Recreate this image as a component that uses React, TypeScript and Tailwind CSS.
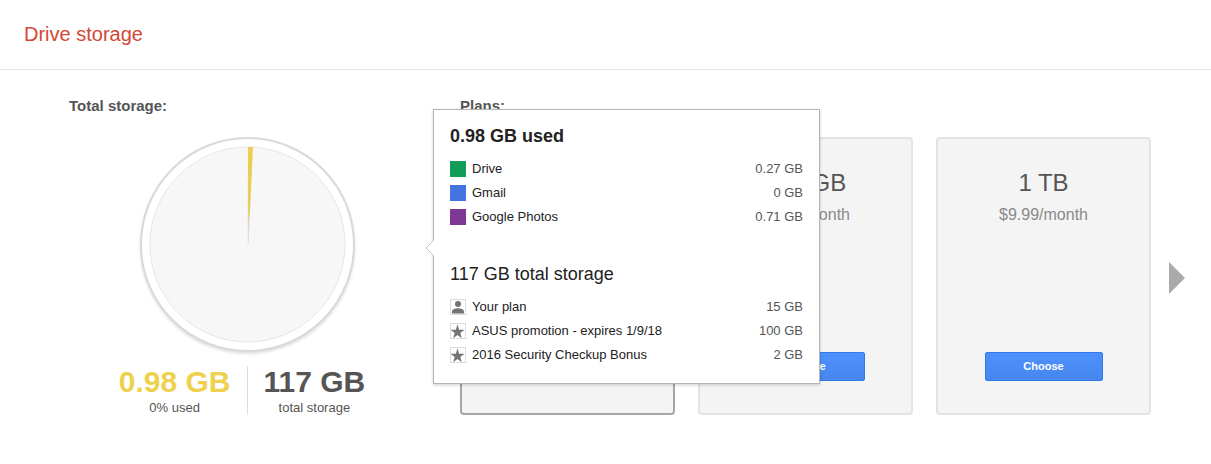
import { ReactNode } from 'react';

const USAGE = [
  { name: 'Drive', amount: '0.27 GB', swatch: 'bg-[#119c58]' },
  { name: 'Gmail', amount: '0 GB', swatch: 'bg-[#4374e0]' },
  { name: 'Google Photos', amount: '0.71 GB', swatch: 'bg-[#7e3794]' },
];

const SOURCES = [
  { name: 'Your plan', amount: '15 GB', icon: 'person' },
  { name: 'ASUS promotion - expires 1/9/18', amount: '100 GB', icon: 'star' },
  { name: '2016 Security Checkup Bonus', amount: '2 GB', icon: 'star' },
];

const PLANS = [
  { size: '15 GB', price: 'Free', current: true },
  { size: '100 GB', price: '$1.99/month', current: false },
  { size: '1 TB', price: '$9.99/month', current: false },
];

const SourceIcon = ({ icon }: { icon: string }) => (
  <svg viewBox="0 0 16 16" className="size-4 shrink-0 fill-[#737373]" aria-hidden="true">
    <rect x="0.5" y="0.5" width="15" height="15" fill="#fff" stroke="#dcdcdc" />
    {icon === 'person' ? (
      <>
        <circle cx="8" cy="5" r="3" />
        <path d="M2 14.500v-2C2 10.400 5.400 9.300 8 9.300s6 1.100 6 3.200v2z" />
      </>
    ) : (
      <path d="M7.500 1.200 9.100 6.700H14.600L10.300 9.900 11.900 15.300 7.500 12 3.100 15.300 4.700 9.900.6 6.700H5.900z" />
    )}
  </svg>
);

const DetailRow = ({ marker, name, amount }: { marker: ReactNode; name: string; amount: string }) => (
  <li className="flex h-6 items-center gap-1.5">
    {marker}
    <span className="text-[#222]">{name}</span>
    <span className="ml-auto text-[#555]">{amount}</span>
  </li>
);

const StoragePopup = () => (
  <div
    role="tooltip"
    className="absolute top-[13px] left-full z-10 ml-[7px] w-[387px] border border-[#b5b5b5] bg-white px-4 pt-3.5 pb-4 text-[13px] shadow-[0_1px_3px_rgba(0,0,0,0.2)]"
  >
    <svg viewBox="0 0 9 16" className="absolute top-[130px] -left-[9px] h-4 w-[9px]" aria-hidden="true">
      <path d="M9 0 1 8l8 8z" fill="#fff" />
      <path d="M8.500.5 1 8l7.500 7.500" fill="none" stroke="#c4c4c4" />
    </svg>
    <h3 className="mb-[9px] text-lg leading-6 font-bold text-[#222]">0.98 GB used</h3>
    <ul>
      {USAGE.map(item => (
        <DetailRow
          key={item.name}
          name={item.name}
          amount={item.amount}
          marker={<span className={`size-4 shrink-0 ${item.swatch}`} />}
        />
      ))}
    </ul>
    <h3 className="mt-[33px] mb-[9px] text-lg leading-6 text-[#222]">117 GB total storage</h3>
    <ul>
      {SOURCES.map(item => (
        <DetailRow
          key={item.name}
          name={item.name}
          amount={item.amount}
          marker={<SourceIcon icon={item.icon} />}
        />
      ))}
    </ul>
  </div>
);

const UsagePie = () => (
  <div className="mx-auto size-[215px] rounded-full border-2 border-[#d9d9d9] bg-white p-2 shadow-[0_2px_3px_rgba(0,0,0,0.12)]">
    <svg viewBox="0 0 195 195" className="size-full overflow-visible" role="img" aria-label="0% used">
      <defs>
        <linearGradient id="slice" x1="0" y1="0" x2="0" y2="1">
          <stop offset="0" stopColor="#edcf4c" />
          <stop offset="0.6" stopColor="#e6cd62" />
          <stop offset="0.85" stopColor="#dcdcdc" />
        </linearGradient>
      </defs>
      <circle cx="97.500" cy="97.500" r="97.500" fill="#f7f7f7" stroke="#e6e6e6" />
      <path d="M97.700 97.500 98 0h5l-4.500 97.500z" fill="url(#slice)" />
    </svg>
  </div>
);

const PlanCard = ({ size, price, current }: { size: string; price: string; current: boolean }) => (
  <li
    className={`flex h-[278px] flex-1 flex-col items-center rounded border-2 bg-[#f4f4f4] pt-7 pb-8 ${
      current ? 'border-[#a6a6a6]' : 'border-[#e3e3e3]'
    }`}
  >
    <h3 className="text-2xl leading-8 text-[#555]">{size}</h3>
    <p className="text-base leading-8 text-[#8a8a8a]">{price}</p>
    {!current && (
      <button
        type="button"
        className="mt-auto h-[29px] w-[118px] rounded-xs border border-[#3079ed] bg-linear-to-b from-[#4d90fe] to-[#4787ed] text-[11px] font-bold text-white"
      >
        Choose
      </button>
    )}
  </li>
);

export default function App() {
  return (
    <div className="bg-white pb-12 font-['Liberation_Sans',Arial,sans-serif] text-[#555]">
      <header className="border-b border-[#e5e5e5] px-6 pt-5 pb-[21px]">
        <h1 className="text-xl leading-7 text-[#d14836]">Drive storage</h1>
      </header>

      <main className="flex gap-[34px] pt-[26px] pr-[26px] pl-[69px]">
        <section className="relative w-[357px] shrink-0">
          <h2 className="mb-[21px] text-[15px] leading-5 font-bold">Total storage:</h2>
          <UsagePie />
          <div className="mt-3.5 grid grid-cols-2 text-center text-[13px]">
            <div className="flex justify-end border-r border-[#dedede] pr-4">
              <div>
                <p className="text-[30px] leading-[31px] font-bold text-[#eed24f]">0.98 GB</p>
                <p className="mt-1 leading-[14px]">0% used</p>
              </div>
            </div>
            <div className="flex pl-4">
              <div>
                <p className="text-[30px] leading-[31px] font-bold">117 GB</p>
                <p className="mt-1 leading-[14px]">total storage</p>
              </div>
            </div>
          </div>
          <StoragePopup />
        </section>

        <section className="flex-1">
          <h2 className="mb-[21px] text-[15px] leading-5 font-bold">Plans:</h2>
          <div className="flex items-center gap-[18px]">
            <ul className="flex flex-1 gap-[23px]">
              {PLANS.map(plan => (
                <PlanCard key={plan.size} {...plan} />
              ))}
            </ul>
            <button type="button" aria-label="More plans" className="shrink-0 pt-1">
              <svg viewBox="0 0 16 32" className="h-8 w-4 fill-[#aaa]">
                <path d="M0 0 16 16 0 32z" />
              </svg>
            </button>
          </div>
        </section>
      </main>
    </div>
  );
}
